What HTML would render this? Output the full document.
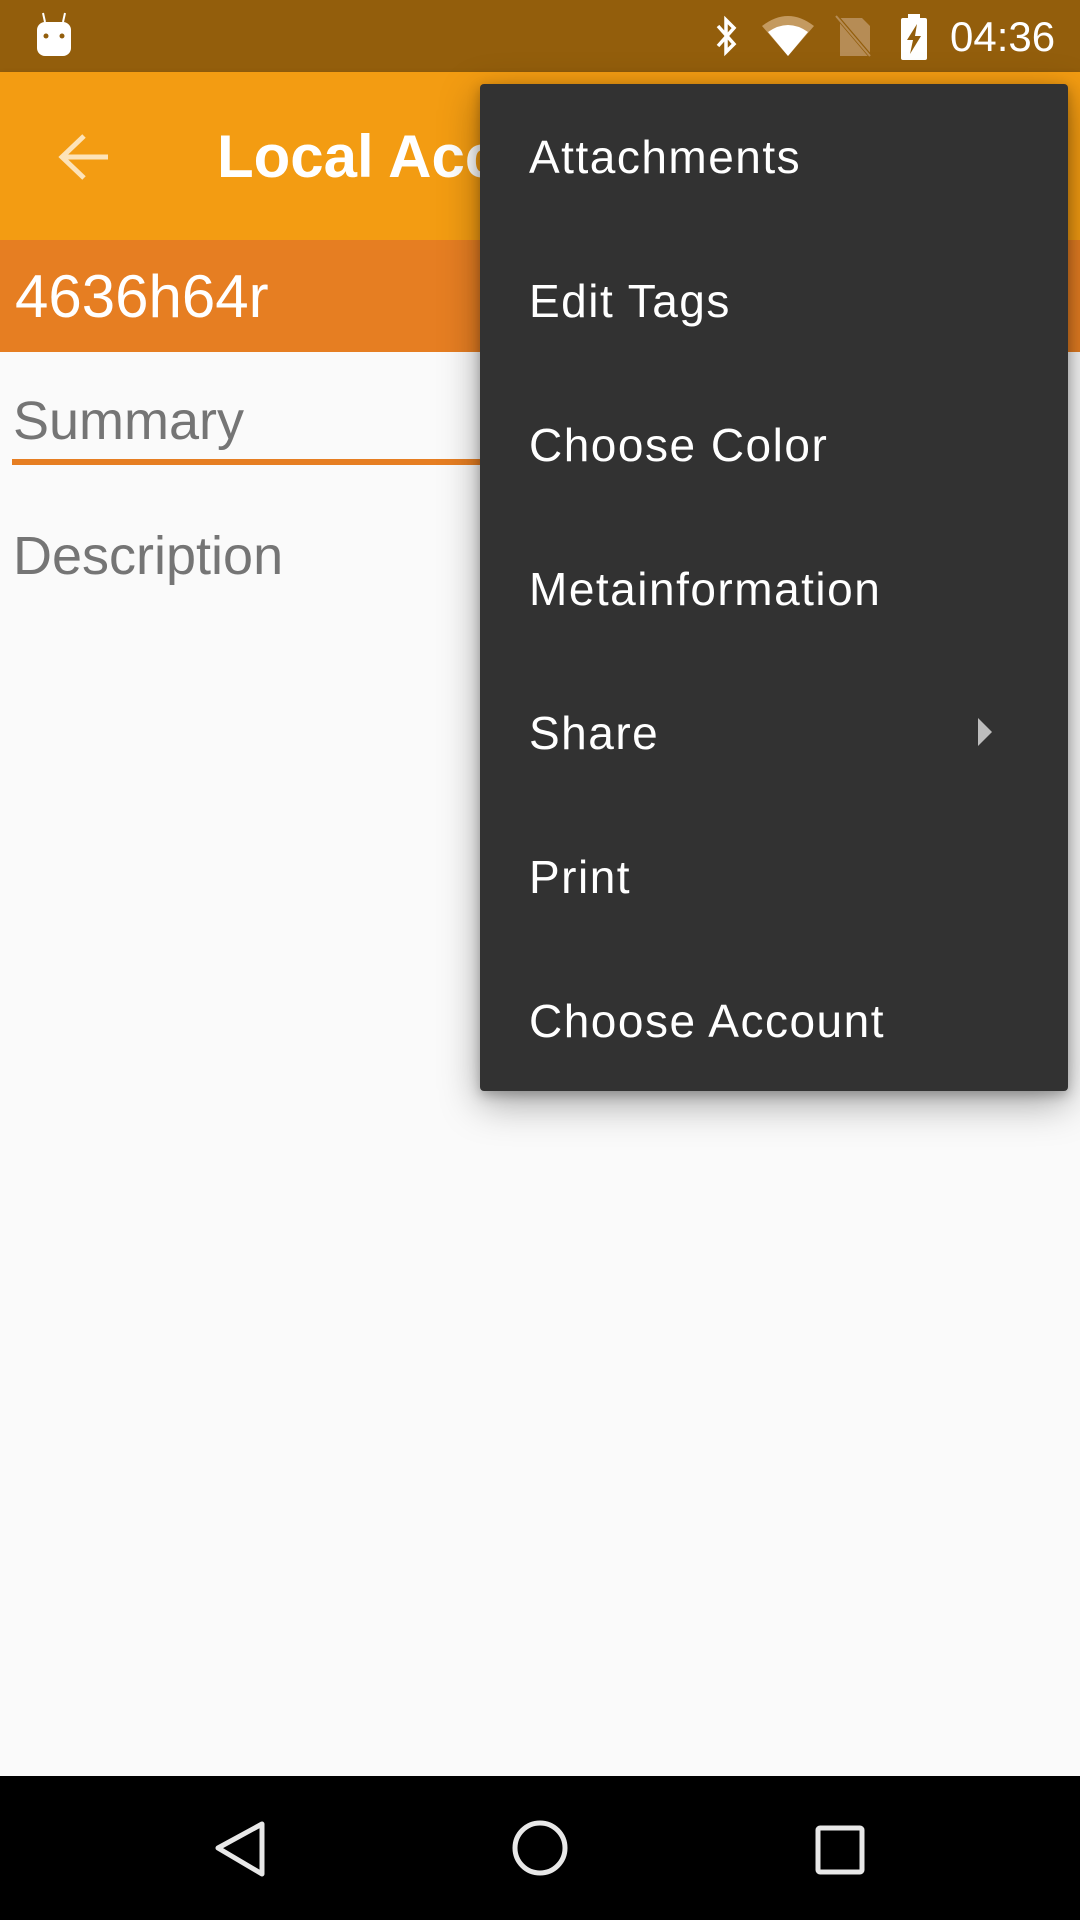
<!DOCTYPE html>
<html><head><meta charset="utf-8"><style>
*{margin:0;padding:0;box-sizing:border-box}
body{width:1080px;height:1920px;position:relative;overflow:hidden;background:#fafafa;font-family:"Liberation Sans",sans-serif}
.a{position:absolute;white-space:nowrap;line-height:1}
.mi{position:absolute;left:49px;font-size:46px;color:#fff;line-height:1;letter-spacing:1.5px}
</style></head><body>
<div class="a" style="left:0;top:0;width:1080px;height:72px;background:#935e0c"></div>
<svg class="a" style="left:30px;top:10px" width="50" height="50" viewBox="0 0 50 50">
<rect x="7" y="12" width="34" height="34" rx="8" fill="#fff"/>
<line x1="15" y1="12" x2="13" y2="3" stroke="#fff" stroke-width="2"/><line x1="33" y1="12" x2="35" y2="3" stroke="#fff" stroke-width="2"/>
<circle cx="16" cy="26" r="2.5" fill="#935e0c"/><circle cx="32" cy="26" r="2.5" fill="#935e0c"/></svg>
<svg class="a" style="left:710px;top:14px" width="32" height="46" viewBox="0 0 32 46"><path d="M8 12 L24 30 L16 38 L16 6 L24 14 L8 32" fill="none" stroke="#fff" stroke-width="3.5"/></svg>
<svg class="a" style="left:760px;top:14px" width="56" height="44" viewBox="0 0 56 44"><path d="M2 12 Q28 -8 54 12 L28 42 Z" fill="#c49a60"/><path d="M8 18 Q28 4 48 18 L28 42 Z" fill="#fff"/></svg>
<svg class="a" style="left:834px;top:14px" width="40" height="46" viewBox="0 0 40 46"><path d="M6 4 H28 L36 12 V42 H6 Z" fill="#b68c55"/><line x1="4" y1="4" x2="38" y2="44" stroke="#935e0c" stroke-width="4"/><line x1="2" y1="2" x2="36" y2="42" stroke="#b68c55" stroke-width="2"/></svg>
<svg class="a" style="left:898px;top:12px" width="32" height="50" viewBox="0 0 32 50"><rect x="10" y="2" width="12" height="6" fill="#fff"/><rect x="3" y="6" width="26" height="42" rx="2" fill="#fff"/><path d="M19 12 L9 28 H15 L12 42 L23 24 H17 Z" fill="#935e0c"/></svg>
<div class="a" style="left:950px;top:16px;font-size:42px;color:#fff">04:36</div>

<div class="a" style="left:0;top:72px;width:1080px;height:168px;background:#f39c12;box-shadow:0 3px 6px rgba(0,0,0,.25)"></div>
<svg class="a" style="left:56px;top:130px" width="56" height="56" viewBox="0 0 56 56"><path d="M52 27 H8 M28 6 L6 27 L28 48" fill="none" stroke="#fde3b8" stroke-width="5"/></svg>
<div class="a" style="left:217px;top:127px;font-size:60px;font-weight:bold;color:#fff">Local Account</div>
<div class="a" style="left:0;top:240px;width:1080px;height:112px;background:#e67e22"></div>
<div class="a" style="left:15px;top:267px;font-size:60px;color:#fff">4636h64r</div>
<div class="a" style="left:13px;top:394px;font-size:54px;color:#757575">Summary</div>
<div class="a" style="left:12px;top:459px;width:1050px;height:6px;background:#e67e22"></div>
<div class="a" style="left:13px;top:529px;font-size:54px;color:#757575">Description</div>

<div class="a" style="left:480px;top:84px;width:588px;height:1007px;background:#323232;border-radius:4px;box-shadow:0 12px 40px rgba(0,0,0,.35),0 4px 12px rgba(0,0,0,.25)">
<div class="mi" style="top:50px">Attachments</div>
<div class="mi" style="top:194px">Edit Tags</div>
<div class="mi" style="top:338px">Choose Color</div>
<div class="mi" style="top:482px">Metainformation</div>
<div class="mi" style="top:626px">Share</div>
<svg style="position:absolute;left:497px;top:633px" width="16" height="30" viewBox="0 0 16 30"><path d="M1 1 L15 15 L1 29 Z" fill="#bdbdbd"/></svg>
<div class="mi" style="top:770px">Print</div>
<div class="mi" style="top:914px">Choose Account</div>
</div>

<div class="a" style="left:0;top:1776px;width:1080px;height:144px;background:#000"></div>
<svg class="a" style="left:0;top:1776px" width="1080" height="144" viewBox="0 0 1080 144">
<path d="M262 48 L218 72 L262 98 Z" fill="none" stroke="#e8e8e8" stroke-width="5" stroke-linejoin="round"/>
<circle cx="540" cy="72" r="25" fill="none" stroke="#e8e8e8" stroke-width="5"/>
<rect x="818" y="52" width="44" height="44" rx="2" fill="none" stroke="#e8e8e8" stroke-width="5"/>
</svg>
</body></html>
